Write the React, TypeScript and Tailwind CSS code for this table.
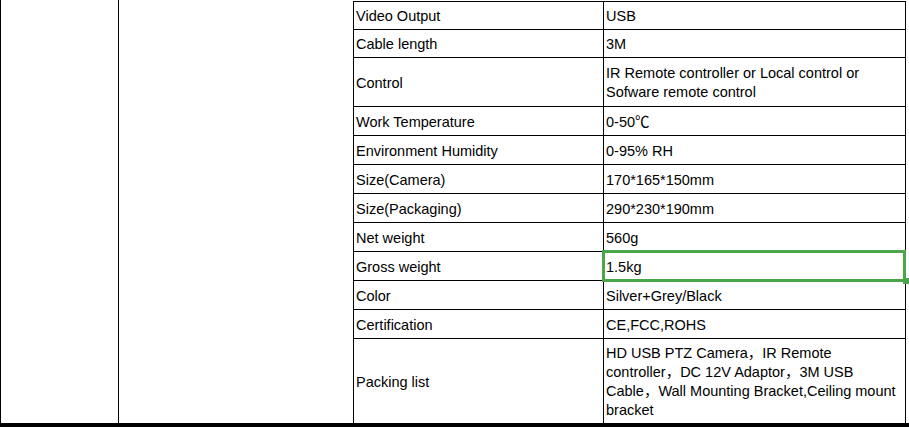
import React from 'react';

type Row = { label: string; value: React.ReactNode; h: number; last?: boolean };

const ROWS: Row[] = [
    { label: 'Video Output', value: 'USB', h: 28 },
    { label: 'Cable length', value: '3M', h: 28 },
    {
        label: 'Control',
        value: (<>IR Remote controller or Local control or<br />Sofware remote control</>),
        h: 49,
    },
    { label: 'Work Temperature', value: '0-50℃', h: 29 },
    { label: 'Environment Humidity', value: '0-95% RH', h: 29 },
    { label: 'Size(Camera)', value: '170*165*150mm', h: 29 },
    { label: 'Size(Packaging)', value: '290*230*190mm', h: 29 },
    { label: 'Net weight', value: '560g', h: 29 },
    { label: 'Gross weight', value: '1.5kg', h: 29 },
    { label: 'Color', value: 'Silver+Grey/Black', h: 29 },
    { label: 'Certification', value: 'CE,FCC,ROHS', h: 29 },
    {
        label: 'Packing list',
        value: (
            <>
                HD USB PTZ Camera，IR Remote<br />
                controller，DC 12V Adaptor，3M USB<br />
                Cable，Wall Mounting Bracket,Ceiling mount<br />
                bracket
            </>
        ),
        h: 84,
        last: true,
    },
];

const App = () => {
    return (
        <div
            className="relative flex w-[909px] h-[427px] bg-white text-black border-b-4 border-black text-[14.5px] leading-[19px]"
            style={{ fontFamily: '"Liberation Sans", Arial, "Noto Sans CJK SC", sans-serif' }}
        >
            {/* blank merged columns */}
            <div className="w-[119px] shrink-0 border-l border-r border-black" />
            <div className="w-[234px] shrink-0" />

            {/* spec table */}
            <div className="w-[553px] shrink-0 pt-[1px] flex flex-col">
                <div className="flex-1 flex flex-col border-t border-l border-r border-black">
                    {ROWS.map(r => (
                        <div
                            key={r.label}
                            className={`flex shrink-0 ${r.last ? 'flex-1' : 'border-b border-black'}`}
                            style={r.last ? undefined : { height: r.h }}
                        >
                            <div className="w-[250px] shrink-0 border-r border-black flex items-center pl-[2px] pt-[2px]">
                                {r.label}
                            </div>
                            <div className="flex-1 flex items-center pl-[2px] pt-[2px]">
                                <div>{r.value}</div>
                            </div>
                        </div>
                    ))}
                </div>
            </div>

            {/* selected cell */}
            <div className="absolute left-[602px] top-[250px] w-[304px] h-[32px] border-[3px] border-[#4aa64a]" />
            <div className="absolute left-[903px] top-[278px] w-[6px] h-[6px] bg-[#4aa64a]" />
        </div>
    );
};

export default App;
